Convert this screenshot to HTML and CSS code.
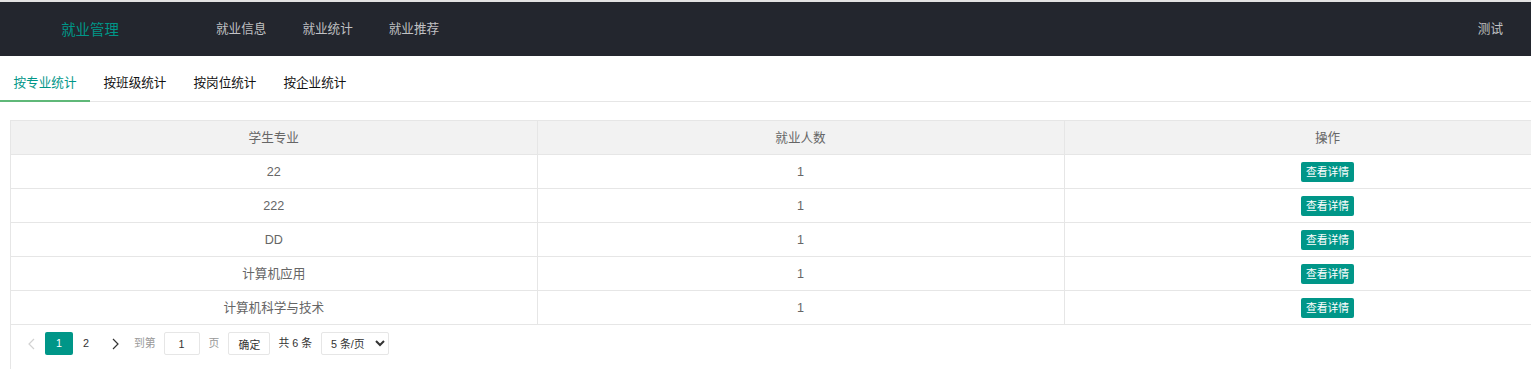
FILE: index.html
```html
<!DOCTYPE html>
<html lang="zh-CN">
<head>
    <meta charset="UTF-8">
    <meta name="viewport" content="width=device-width, initial-scale=1.0">
    <title>就业统计</title>
    <link rel="stylesheet" href="styles.css">
</head>
<body>
    <div class="topline"></div>
    <header class="header">
        <div class="logo">就业管理</div>
        <ul class="nav">
            <li><a href="#">就业信息</a></li>
            <li><a href="#">就业统计</a></li>
            <li><a href="#">就业推荐</a></li>
        </ul>
        <ul class="nav nav-right">
            <li><a href="#">测试</a></li>
        </ul>
    </header>

    <ul class="tab-title">
        <li class="this">按专业统计</li>
        <li>按班级统计</li>
        <li>按岗位统计</li>
        <li>按企业统计</li>
    </ul>

    <main class="content">
        <div class="table-view">
            <table class="table">
                <colgroup>
                    <col style="width: 526px">
                    <col style="width: 527px">
                    <col style="width: 527px">
                </colgroup>
                <thead>
                    <tr>
                        <th>学生专业</th>
                        <th>就业人数</th>
                        <th>操作</th>
                    </tr>
                </thead>
                <tbody>
                    <tr>
                        <td>22</td>
                        <td>1</td>
                        <td><a class="btn-xs" href="#">查看详情</a></td>
                    </tr>
                    <tr>
                        <td>222</td>
                        <td>1</td>
                        <td><a class="btn-xs" href="#">查看详情</a></td>
                    </tr>
                    <tr>
                        <td>DD</td>
                        <td>1</td>
                        <td><a class="btn-xs" href="#">查看详情</a></td>
                    </tr>
                    <tr>
                        <td>计算机应用</td>
                        <td>1</td>
                        <td><a class="btn-xs" href="#">查看详情</a></td>
                    </tr>
                    <tr>
                        <td>计算机科学与技术</td>
                        <td>1</td>
                        <td><a class="btn-xs" href="#">查看详情</a></td>
                    </tr>
                </tbody>
            </table>
            <div class="laypage">
                <span class="page-prev disabled">
                    <svg width="7" height="12" viewBox="0 0 7 12"><path d="M6 1 1 6l5 5" fill="none" stroke="currentColor" stroke-width="1.2"/></svg>
                </span>
                <span class="page-curr">1</span>
                <a class="page-num" href="#">2</a>
                <a class="page-next" href="#">
                    <svg width="7" height="12" viewBox="0 0 7 12"><path d="M1 1l5 5-5 5" fill="none" stroke="currentColor" stroke-width="1.2"/></svg>
                </a>
                <span class="page-skip">到第</span>
                <input class="page-input" type="text" value="1">
                <span class="page-skip page-unit">页</span>
                <button class="page-btn" type="button">确定</button>
                <span class="page-count">共&nbsp;6&nbsp;条</span>
                <select class="page-limits">
                    <option>5 条/页</option>
                    <option>10 条/页</option>
                    <option>20 条/页</option>
                </select>
            </div>
        </div>
    </main>
</body>
</html>
```

FILE: styles.css
```css
body {
    margin: 0;
    padding: 0;
    font-family: "Liberation Sans", "Noto Sans CJK SC", sans-serif;
    font-size: 12.6px;
    color: #333;
    background: #fff;
    overflow: hidden;
}
a {
    text-decoration: none;
}
ul {
    list-style: none;
    margin: 0;
    padding: 0;
}
.topline {
    height: 2px;
    background: #e2e2e2;
}
.header {
    display: flex;
    align-items: center;
    height: 54px;
    background: #23262e;
}
.logo {
    width: 180px;
    margin-top: -2px;
    text-align: center;
    font-size: 14.4px;
    color: #009688;
}
.nav {
    display: flex;
    margin-left: 18px;
}
.nav li a {
    display: block;
    padding: 0 18px;
    line-height: 54px;
    color: rgba(255, 255, 255, 0.72);
}
.nav-right {
    margin-left: auto;
    margin-right: 10px;
}
.tab-title {
    display: flex;
    margin-top: 9px;
    height: 36px;
    border-bottom: 1px solid #e6e6e6;
}
.tab-title li {
    position: relative;
    padding: 0 13.5px;
    line-height: 36px;
    color: #111;
    cursor: pointer;
}
.tab-title li.this {
    color: #009688;
}
.tab-title li.this::after {
    content: "";
    position: absolute;
    left: 0;
    right: 0;
    bottom: -1px;
    border-bottom: 2px solid #5fb878;
}
.content {
    padding: 18px 0 0 10px;
}
.table-view {
    width: 1581px;
    height: 260px;
    border: 1px solid #e6e6e6;
}
.table {
    width: 1580px;
    table-layout: fixed;
    border-collapse: collapse;
    color: #666;
}
.table th,
.table td {
    height: 20px;
    padding: 7px 0 6px;
    line-height: 20px;
    text-align: center;
    font-weight: normal;
    border-right: 1px solid #e6e6e6;
    border-bottom: 1px solid #e6e6e6;
}
.table th {
    background: #f2f2f2;
}
.btn-xs {
    display: inline-block;
    height: 20px;
    line-height: 20px;
    padding: 0 4.5px;
    font-size: 10.8px;
    color: #fff;
    background: #009688;
    border-radius: 2px;
    vertical-align: top;
}
.laypage {
    display: flex;
    align-items: center;
    padding: 7px 0 0 7px;
    font-size: 10.8px;
}
.laypage > * {
    box-sizing: border-box;
    height: 23px;
    line-height: 23px;
}
.page-prev,
.page-next {
    display: flex;
    align-items: center;
    justify-content: center;
    color: #333;
}
.page-prev {
    width: 27px;
}
.page-next {
    width: 33px;
}
.disabled {
    color: #d2d2d2;
}
.page-curr {
    width: 28px;
    text-align: center;
    color: #fff;
    background: #009688;
    border-radius: 2px;
}
.page-num {
    width: 26px;
    text-align: center;
    color: #333;
}
.page-skip {
    margin-left: 2px;
    color: #999;
}
.page-input {
    width: 36px;
    margin-left: 8px;
    padding: 0;
    border: 1px solid #e6e6e6;
    border-radius: 2px;
    text-align: center;
    font: inherit;
    color: #333;
    outline: none;
}
.page-unit {
    margin-left: 9px;
}
.page-btn {
    width: 42px;
    margin-left: 9px;
    padding: 0;
    border: 1px solid #e6e6e6;
    border-radius: 2px;
    background: #fff;
    font: inherit;
    color: #333;
}
.page-count {
    margin-left: 8px;
    color: #333;
}
.page-limits {
    width: 68px;
    margin-left: 9px;
    padding: 0 0 0 5px;
    border: 1px solid #e6e6e6;
    border-radius: 2px;
    background: #fff;
    font: inherit;
    color: #333;
}
```
